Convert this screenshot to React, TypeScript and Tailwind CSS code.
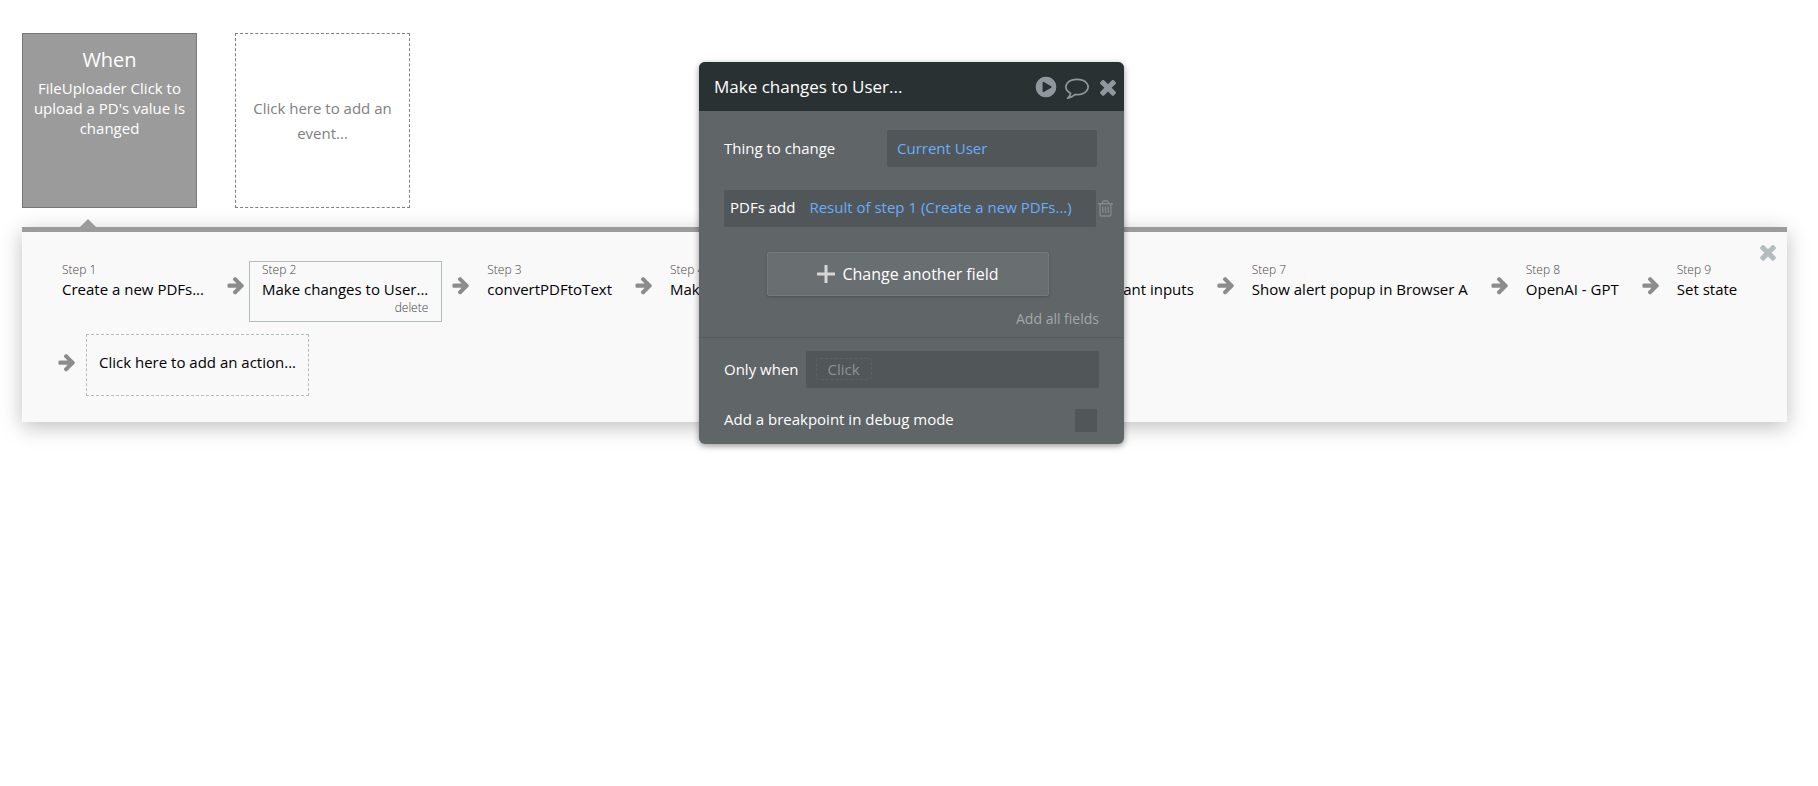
import React from "react";

const ARROW =
  "M1600 960q0 54-37 91l-651 651q-39 37-91 37-51 0-90-37l-75-75q-38-38-38-91t38-91l293-293h-704q-52 0-84.5-37.5t-32.5-90.5v-128q0-53 32.5-90.5t84.5-37.5h704l-293-294q-38-36-38-90t38-90l75-75q38-38 90-38 53 0 91 38l651 651q37 35 37 90z";
const TIMES =
  "M1490 1322q0 40-28 68l-136 136q-28 28-68 28t-68-28l-294-294-294 294q-28 28-68 28t-68-28l-136-136q-28-28-28-68t28-68l294-294-294-294q-28-28-28-68t28-68l136-136q28-28 68-28t68 28l294 294 294-294q28-28 68-28t68 28l136 136q28 28 28 68t-28 68l-294 294 294 294q28 28 28 68z";
const PLAY =
  "M896 128q209 0 385.5 103t279.5 279.5 103 385.5-103 385.5-279.5 279.5-385.5 103-385.5-103-279.5-279.5-103-385.5 103-385.5 279.5-279.5 385.5-103zm384 823q32-18 32-55t-32-55l-544-320q-31-19-64-1-32 19-32 56v640q0 37 32 56 16 8 32 8 17 0 32-9z";
const COMMENT =
  "M896 384q-204 0-381.5 69.5t-282 187.5-104.5 255q0 112 71.5 213.5t201.5 175.5l87 50-27 96q-24 91-70 172 152-63 275-171l43-38 57 6q69 8 130 8 204 0 381.5-69.5t282-187.5 104.5-255-104.5-255-282-187.5-381.5-69.5zm896 512q0 174-120 321.5t-326 233-450 85.5q-70 0-145-8-198 175-460 242-49 14-114 22h-5q-15 0-27-10.5t-16-27.5v-1q-3-4-.5-12t2-10 4.5-9.5l6-9 7-8.5 8-9q7-8 31-34.5t34.5-38 31-39.5 32.5-51 27-59 26-76q-157-89-247.5-220t-90.5-281q0-174 120-321.5t326-233 450-85.5 450 85.5 326 233 120 321.5z";
const TRASH =
  "M704 736v576q0 14-9 23t-23 9h-64q-14 0-23-9t-9-23v-576q0-14 9-23t23-9h64q14 0 23 9t9 23zm256 0v576q0 14-9 23t-23 9h-64q-14 0-23-9t-9-23v-576q0-14 9-23t23-9h64q14 0 23 9t9 23zm256 0v576q0 14-9 23t-23 9h-64q-14 0-23-9t-9-23v-576q0-14 9-23t23-9h64q14 0 23 9t9 23zm128 724v-948h-896v948q0 22 7 40.5t14.5 27 10.5 8.5h832q3 0 10.5-8.5t14.5-27 7-40.5zm-672-1076h448l-48-117q-7-9-17-11h-317q-10 2-17 11zm928 32v64q0 14-9 23t-23 9h-96v948q0 83-47 143.5t-113 60.5h-832q-66 0-113-58.5t-47-141.5v-952h-96q-14 0-23-9t-9-23v-64q0-14 9-23t23-9h309l70-167q15-37 54-63t79-26h320q40 0 79 26t54 63l70 167h309q14 0 23 9t9 23z";

function Icon({ d, className }: { d: string; className: string }) {
  return (
    <svg viewBox="0 0 1792 1792" className={className} fill="currentColor" aria-hidden="true">
      <path d={d} />
    </svg>
  );
}

const steps = [
  "Create a new PDFs...",
  "Make changes to User...",
  "convertPDFtoText",
  "Make changes to User...",
  "Create a list...",
  "Reset relevant inputs",
  "Show alert popup in Browser A",
  "OpenAI - GPT",
  "Set state",
];

function Arrow() {
  return (
    <span className="flex h-12 w-[18px] shrink-0 items-center justify-center text-[#8c8c8c]">
      <Icon d={ARROW} className="size-5 shrink-0" />
    </span>
  );
}

function Step({ index, name }: { index: number; name: string }) {
  const selected = index === 2;
  return (
    <div
      className={
        "flex h-[61px] shrink-0 flex-col border pl-3 " +
        (selected ? "border-[#b3bdc0] pr-[13px]" : "border-transparent pr-3")
      }
    >
      <span className="h-[17px] text-xs leading-4 font-light text-[#444]">Step {index}</span>
      <button type="button" className="h-[21px] pb-px text-left text-[15px] leading-5 text-black">
        {name}
      </button>
      {selected && (
        <button type="button" className="self-end text-xs leading-4 font-light text-[#444]">
          delete
        </button>
      )}
    </div>
  );
}

function PropertyEditor() {
  return (
    <section className="absolute top-[62px] left-[699px] w-[425px] overflow-hidden rounded-md bg-[#606568] text-[15px] leading-5 text-white shadow-[0_2px_6px_rgba(0,0,0,0.4)]">
      <header className="flex h-[49px] items-center bg-[#293133] pt-px pr-1 pl-[15px]">
        <h2 className="flex-1 text-[17px]">Make changes to User...</h2>
        <div className="flex items-center gap-[7px] text-[#8f999d]">
          <button type="button" aria-label="Run" className="size-6">
            <Icon d={PLAY} className="size-6" />
          </button>
          <button type="button" aria-label="Comment" className="size-6">
            <Icon d={COMMENT} className="size-6" />
          </button>
          <button type="button" aria-label="Close" className="size-6">
            <Icon d={TIMES} className="size-6" />
          </button>
        </div>
      </header>
      <div className="flex flex-col border-b border-[#575c5e] px-[25px] pt-[19px] pb-2">
        <div className="flex items-center justify-between pr-[2px]">
          <span className="pb-[2px]">Thing to change</span>
          <button type="button" className="h-[37px] w-[210px] rounded-xs bg-[#515658] px-[10px] pb-[2px] text-left text-[#68aefc]">
            Current User
          </button>
        </div>
        <div className="mt-[23px] flex items-center">
          <div className="flex h-[37px] w-[372px] shrink-0 items-center gap-[14px] rounded-xs bg-[#515658] px-[6px] pb-[3px] whitespace-nowrap">
            <span>PDFs add</span>
            <button type="button" className="text-[#68aefc]">
              Result of step 1 (Create a new PDFs...)
            </button>
          </div>
          <button type="button" aria-label="Delete field" className="shrink-0 text-[#84898b]">
            <Icon d={TRASH} className="size-[19px]" />
          </button>
        </div>
        <button
          type="button"
          className="mt-[25px] ml-[43px] flex h-[44px] w-[282px] items-center justify-center gap-[7px] self-start rounded-xs border border-[#74797b] bg-[#696e70] text-[16px] shadow-[0_1px_3px_rgba(0,0,0,0.2)]"
        >
          <svg viewBox="0 0 18 18" className="size-[18px]" aria-hidden="true">
            <path d="M9 0v18M0 9h18" stroke="#d5d7d7" strokeWidth="3" />
          </svg>
          Change another field
        </button>
        <button type="button" className="mt-[13px] self-end text-sm leading-5 text-[#a4a7a8]">
          Add all fields
        </button>
      </div>
      <div className="px-[25px] pt-[13px] pb-3">
        <div className="flex items-center justify-between gap-[7px]">
          <span className="shrink-0 pb-[2px]">Only when</span>
          <button type="button" className="flex h-[37px] flex-1 items-center rounded-xs bg-[#515658] px-[10px] pb-[2px] text-[#8f9394]">
            <span className="rounded-sm border border-dashed border-[#5c6163] px-[11px]">Click</span>
          </button>
        </div>
        <label className="mt-[21px] flex items-start justify-between pr-[2px]">
          Add a breakpoint in debug mode
          <input type="checkbox" className="h-[23px] w-[22px] appearance-none bg-[#515658] checked:bg-[#68aefc]" />
        </label>
      </div>
    </section>
  );
}

export default function App() {
  return (
    <main className="relative min-h-screen bg-white px-[22px] pt-[33px] font-['Open_Sans',sans-serif]">
      <div className="flex gap-[38px]">
        <button
          type="button"
          className="flex size-[175px] flex-col items-center border border-[#787878] bg-[#9b9b9b] px-[10px] pt-3 text-white"
        >
          <span className="text-[20px] leading-7">When</span>
          <span className="mt-1 text-[15px] leading-5">FileUploader Click to upload a PD's value is changed</span>
        </button>
        <button
          type="button"
          className="flex size-[175px] items-center justify-center border border-dashed border-[#808080] px-3 text-[15px] leading-[25px] text-[#808080]"
        >
          Click here to add an event...
        </button>
      </div>

      <section className="relative mt-[19px] mr-[9px] border-t-5 border-[#9b9b9b] bg-[#f9f9f9] pt-[29px] pr-[30px] pb-[26px] pl-[27px] shadow-[0_5px_20px_rgba(0,0,0,0.25)]">
        <svg viewBox="0 0 16 8" className="absolute -top-[13px] left-[58px] h-2 w-4" aria-hidden="true">
          <path d="M0 8L8 0l8 8z" fill="#9b9b9b" />
        </svg>
        <button type="button" aria-label="Close workflow" className="absolute top-2 right-[7px] text-[#b3bdc0]">
          <Icon d={TIMES} className="size-6" />
        </button>
        <ol className="flex whitespace-nowrap">
          {steps.map((name, i) => (
            <li key={i} className="flex shrink-0 items-start">
              {i > 0 && (
                <span className="mr-1 ml-[10px] flex">
                  <Arrow />
                </span>
              )}
              <Step index={i + 1} name={name} />
            </li>
          ))}
        </ol>
        <div className="mt-3 flex items-start">
          <span className="mt-1 ml-[9px] flex">
            <Arrow />
          </span>
          <button
            type="button"
            className="ml-[10px] h-[62px] border border-dashed border-[#b3bdc0] px-3 pb-[6px] text-[15px] leading-5 text-black"
          >
            Click here to add an action...
          </button>
        </div>
      </section>

      <PropertyEditor />
    </main>
  );
}
